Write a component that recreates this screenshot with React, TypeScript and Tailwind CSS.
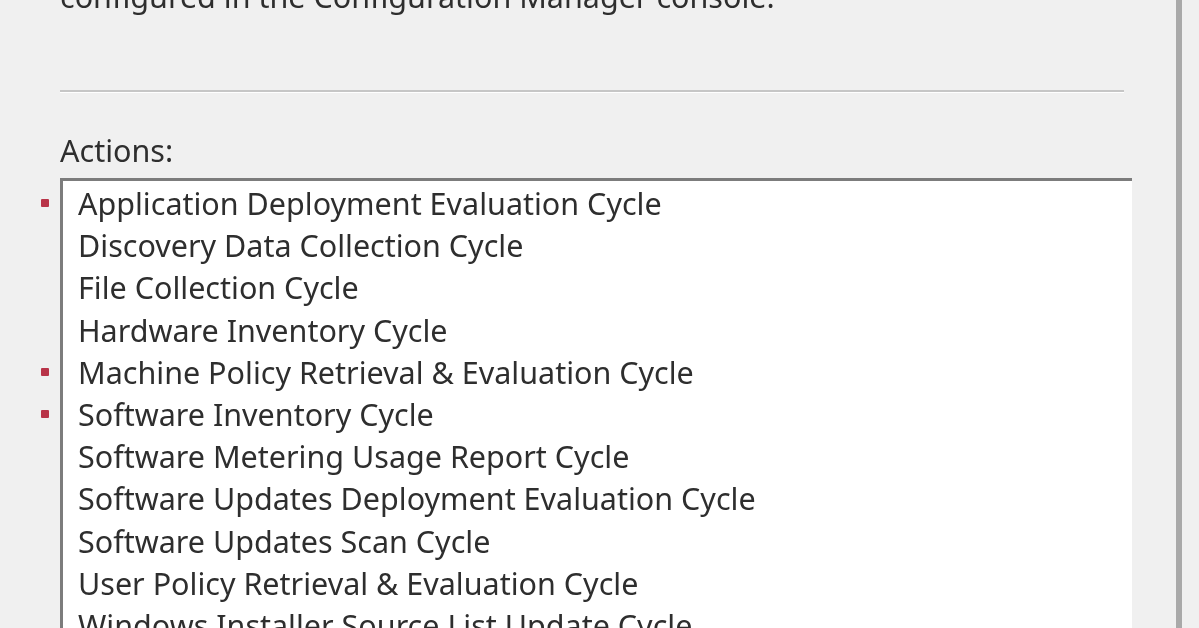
const actions = [
  { label: "Application Deployment Evaluation Cycle", marked: true },
  { label: "Discovery Data Collection Cycle", marked: false },
  { label: "File Collection Cycle", marked: false },
  { label: "Hardware Inventory Cycle", marked: false },
  { label: "Machine Policy Retrieval & Evaluation Cycle", marked: true },
  { label: "Software Inventory Cycle", marked: true },
  { label: "Software Metering Usage Report Cycle", marked: false },
  { label: "Software Updates Deployment Evaluation Cycle", marked: false },
  { label: "Software Updates Scan Cycle", marked: false },
  { label: "User Policy Retrieval & Evaluation Cycle", marked: false },
  { label: "Windows Installer Source List Update Cycle", marked: false },
];

export default function App() {
  return (
    <div
      className="w-[1199px] h-[628px] overflow-hidden bg-[#f0f0f0] flex text-[#2e2e2e] text-[30.5px] leading-[42px]"
      style={{ fontFamily: '"Noto Sans", "Open Sans", sans-serif' }}
    >
      {/* Dialog panel */}
      <div className="w-[1182px] shrink-0 border-r-[6px] border-[#a9a9a9] flex flex-col blur-[0.7px]">
        {/* Description text, scrolled mostly out of view */}
        <div className="-mt-[25px] pl-[60px] whitespace-nowrap">
          configured in the Configuration Manager console.
        </div>

        {/* Separator */}
        <div className="mt-[73px] ml-[60px] mr-[52px] border-t-2 border-[#c6c6c6] border-b border-b-white" />

        {/* Actions label */}
        <div className="mt-[36px] pl-[60px]">Actions:</div>

        {/* List with markers on the left */}
        <div className="flex mt-[7px] flex-1 min-h-0">
          <div className="w-[60px] shrink-0 pt-[4px] flex flex-col">
            {actions.map((a, i) => (
              <div key={i} className="h-[42.2px] shrink-0 flex items-center justify-end pr-[11px]">
                {a.marked && <span className="w-[8px] h-[8px] bg-[#b83448] rounded-[1px]" />}
              </div>
            ))}
          </div>
          <div className="w-[1072px] shrink-0 bg-white border-t-[3px] border-l-[3px] border-[#7c7c7c] pl-[15px] pt-[1px] overflow-hidden">
            {actions.map((a, i) => (
              <div key={i} className="h-[42.2px] leading-[42.2px] whitespace-nowrap">
                {a.label}
              </div>
            ))}
          </div>
        </div>
      </div>
    </div>
  );
}
